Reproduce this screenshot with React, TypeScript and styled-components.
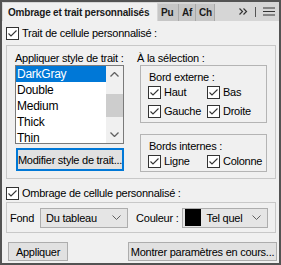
import React from 'react'
import styled, { createGlobalStyle } from 'styled-components'

const GlobalStyle = createGlobalStyle`
  html, body {
    margin: 0;
    padding: 0;
    background: #f0f0f0;
  }
`

const Frame = styled.div`
  width: 281px;
  height: 265px;
  box-sizing: border-box;
  border: 2px solid #535353;
  background: #f0f0f0;
  display: flex;
  flex-direction: column;
  font-family: "Liberation Sans", Arial, sans-serif;
  font-size: 11px;
  letter-spacing: -0.25px;
  color: #000;
  overflow: hidden;
`

const TabBar = styled.div`
  height: 19px;
  flex-shrink: 0;
  background: #d6d6d6;
  display: flex;
  align-items: flex-end;
  padding-left: 1px;
`

const Tab = styled.div<{ $active?: boolean; $width: number }>`
  width: ${p => p.$width}px;
  height: ${p => (p.$active ? 18 : 17)}px;
  box-sizing: border-box;
  background: ${p => (p.$active ? '#f0f0f0' : '#c6c6c6')};
  border-right: 1px solid ${p => (p.$active ? '#d6d6d6' : '#a8a8a8')};
  font-size: 10px;
  font-weight: bold;
  letter-spacing: -0.2px;
  color: #1a1a1a;
  white-space: nowrap;
  overflow: hidden;
  display: flex;
  align-items: center;
  padding-left: ${p => (p.$active ? 5 : 3)}px;
`

const TabTools = styled.div`
  margin-left: auto;
  height: 19px;
  display: flex;
  align-items: center;
  gap: 7px;
  padding-right: 4px;
  color: #333;
`

const ToolSep = styled.div`
  width: 1px;
  height: 10px;
  background: #555;
`

const Body = styled.div`
  flex: 1;
  display: flex;
  flex-direction: column;
  padding: 6px 2px 0 4px;
`

const CheckRow = styled.label`
  display: flex;
  align-items: center;
  gap: 3px;
  height: 13px;
  line-height: 13px;
  white-space: nowrap;
`

const Box = styled.span`
  width: 13px;
  height: 13px;
  box-sizing: border-box;
  border: 1px solid #333;
  background: #fff;
  display: inline-flex;
  align-items: center;
  justify-content: center;
  flex-shrink: 0;
`

const Group = styled.div<{ $height: number }>`
  height: ${p => p.$height}px;
  box-sizing: border-box;
  border: 1px solid #c8c8c8;
  width: 270px;
`

const TraitGroup = styled(Group)`
  margin-top: 5px;
  display: grid;
  grid-template-columns: 122px 1fr;
  padding: 6px 0 0 8px;
`

const Column = styled.div`
  display: flex;
  flex-direction: column;
`

const Caption = styled.div`
  height: 13px;
  line-height: 13px;
  white-space: nowrap;
`

const ListBox = styled.div`
  width: 109px;
  height: 79px;
  box-sizing: border-box;
  border: 1px solid #7a7a7a;
  background: #fff;
  display: flex;
  overflow: hidden;
`

const Items = styled.div`
  flex: 1;
  display: flex;
  flex-direction: column;
`

const Item = styled.div<{ $selected?: boolean }>`
  height: 16px;
  flex-shrink: 0;
  line-height: 16px;
  padding-left: 1px;
  font-size: 12px;
  background: ${p => (p.$selected ? '#0078d7' : 'transparent')};
  color: ${p => (p.$selected ? '#fff' : '#000')};
`

const ScrollBar = styled.div`
  width: 17px;
  background: #f0f0f0;
  display: flex;
  flex-direction: column;
  align-items: center;
`

const ScrollArrow = styled.div<{ $end?: boolean }>`
  height: 17px;
  width: 17px;
  margin-top: ${p => (p.$end ? 'auto' : '0')};
  display: flex;
  align-items: center;
  justify-content: center;
`

const Thumb = styled.div`
  margin-top: 11px;
  width: 17px;
  height: 23px;
  background: #cdcdcd;
`

const FocusButton = styled.div`
  margin-top: 4px;
  margin-left: 1px;
  width: 108px;
  height: 23px;
  box-sizing: border-box;
  border: 2px solid #0078d7;
  background: #e1e1e1;
  display: flex;
  align-items: center;
  justify-content: center;
  white-space: nowrap;
`

const SubBox = styled.div<{ $height: number; $top: number }>`
  margin-top: ${p => p.$top}px;
  margin-left: 3px;
  width: 127px;
  height: ${p => p.$height}px;
  box-sizing: border-box;
  border: 1px solid #b4b4b4;
  padding: 5px 0 0 8px;
  display: flex;
  flex-direction: column;
`

const CheckGrid = styled.div`
  margin-top: 2px;
  display: grid;
  grid-template-columns: 59px 1fr;
  row-gap: 6px;
  margin-left: -1px;
`

const ShadeRow = styled(CheckRow)`
  margin-top: 8px;
`

const FondGroup = styled(Group)`
  margin-top: 2px;
  display: flex;
  align-items: center;
  padding-left: 3px;
`

const Select = styled.div<{ $width: number }>`
  width: ${p => p.$width}px;
  height: 20px;
  box-sizing: border-box;
  border: 1px solid #adadad;
  background: #e5e5e5;
  display: flex;
  align-items: center;
  padding: 0 6px 0 5px;
  gap: 5px;
  white-space: nowrap;
`

const Swatch = styled.span`
  width: 16px;
  height: 17px;
  background: #000;
  margin-left: -3px;
`

const Chevron = styled.svg`
  margin-left: auto;
`

const FieldLabel = styled.span<{ $before?: number; $gap: number }>`
  margin-left: ${p => p.$before ?? 0}px;
  margin-right: ${p => p.$gap}px;
  white-space: nowrap;
`

const ButtonRow = styled.div`
  margin-top: 9px;
  display: flex;
  justify-content: space-between;
  padding: 0 0 0 2px;
  width: 269px;
`

const Button = styled.div<{ $width: number }>`
  width: ${p => p.$width}px;
  height: 19px;
  box-sizing: border-box;
  border: 1px solid #adadad;
  background: #e1e1e1;
  display: flex;
  align-items: center;
  justify-content: center;
  white-space: nowrap;
`

const Tick = () => (
  <Box>
    <svg width="11" height="11" viewBox="0 0 11 11">
      <path d="M1.5 5.5 L4 8 L9.5 2.5" fill="none" stroke="#333" strokeWidth="1.1" />
    </svg>
  </Box>
)

const Check = ({ children }: { children: React.ReactNode }) => (
  <CheckRow>
    <Tick />
    {children}
  </CheckRow>
)

const Down = () => (
  <Chevron width="9" height="5" viewBox="0 0 9 5">
    <path d="M0.5 0.5 L4.5 4.5 L8.5 0.5" fill="none" stroke="#606060" strokeWidth="1" />
  </Chevron>
)

const styles = ['DarkGray', 'Double', 'Medium', 'Thick', 'Thin']

const App = () => {
  return (
    <>
      <GlobalStyle />
      <Frame>
        <TabBar>
          <Tab $active $width={155}>Ombrage et trait personnalisés</Tab>
          <Tab $width={21}>Pu</Tab>
          <Tab $width={17}>Af</Tab>
          <Tab $width={19}>Ch</Tab>
          <TabTools>
            <svg width="9" height="7" viewBox="0 0 9 7">
              <path d="M0.5 0.5 L3.5 3.5 L0.5 6.5 M4.5 0.5 L7.5 3.5 L4.5 6.5" fill="none" stroke="#333" strokeWidth="1.2" />
            </svg>
            <ToolSep />
            <svg width="12" height="9" viewBox="0 0 12 9">
              <path d="M0 1 H12 M0 4.5 H12 M0 8 H12" stroke="#333" strokeWidth="1.2" />
            </svg>
          </TabTools>
        </TabBar>
        <Body>
          <Check>Trait de cellule personnalisé :</Check>
          <TraitGroup $height={134}>
            <Column>
              <Caption>Appliquer style de trait :</Caption>
              <ListBox>
                <Items>
                  {styles.map((s, i) => (
                    <Item key={s} $selected={i === 0}>{s}</Item>
                  ))}
                </Items>
                <ScrollBar>
                  <ScrollArrow>
                    <svg width="9" height="5" viewBox="0 0 9 5">
                      <path d="M0.5 4.5 L4.5 0.5 L8.5 4.5" fill="none" stroke="#606060" strokeWidth="1.3" />
                    </svg>
                  </ScrollArrow>
                  <Thumb />
                  <ScrollArrow $end>
                    <svg width="9" height="5" viewBox="0 0 9 5">
                      <path d="M0.5 0.5 L4.5 4.5 L8.5 0.5" fill="none" stroke="#606060" strokeWidth="1.3" />
                    </svg>
                  </ScrollArrow>
                </ScrollBar>
              </ListBox>
              <FocusButton>Modifier style de trait...</FocusButton>
            </Column>
            <Column>
              <Caption>À la sélection :</Caption>
              <SubBox $top={0} $height={58}>
                <Caption>Bord externe :</Caption>
                <CheckGrid>
                  <Check>Haut</Check>
                  <Check>Bas</Check>
                  <Check>Gauche</Check>
                  <Check>Droite</Check>
                </CheckGrid>
              </SubBox>
              <SubBox $top={11} $height={38}>
                <Caption>Bords internes :</Caption>
                <CheckGrid>
                  <Check>Ligne</Check>
                  <Check>Colonne</Check>
                </CheckGrid>
              </SubBox>
            </Column>
          </TraitGroup>
          <ShadeRow>
            <Tick />
            Ombrage de cellule personnalisé :
          </ShadeRow>
          <FondGroup $height={31}>
            <FieldLabel $gap={6}>Fond</FieldLabel>
            <Select $width={88}>
              Du tableau
              <Down />
            </Select>
            <FieldLabel $before={8} $gap={4}>Couleur :</FieldLabel>
            <Select $width={86}>
              <Swatch />
              Tel quel
              <Down />
            </Select>
          </FondGroup>
          <ButtonRow>
            <Button $width={60}>Appliquer</Button>
            <Button $width={149}>Montrer paramètres en cours...</Button>
          </ButtonRow>
        </Body>
      </Frame>
    </>
  )
}

export default App
